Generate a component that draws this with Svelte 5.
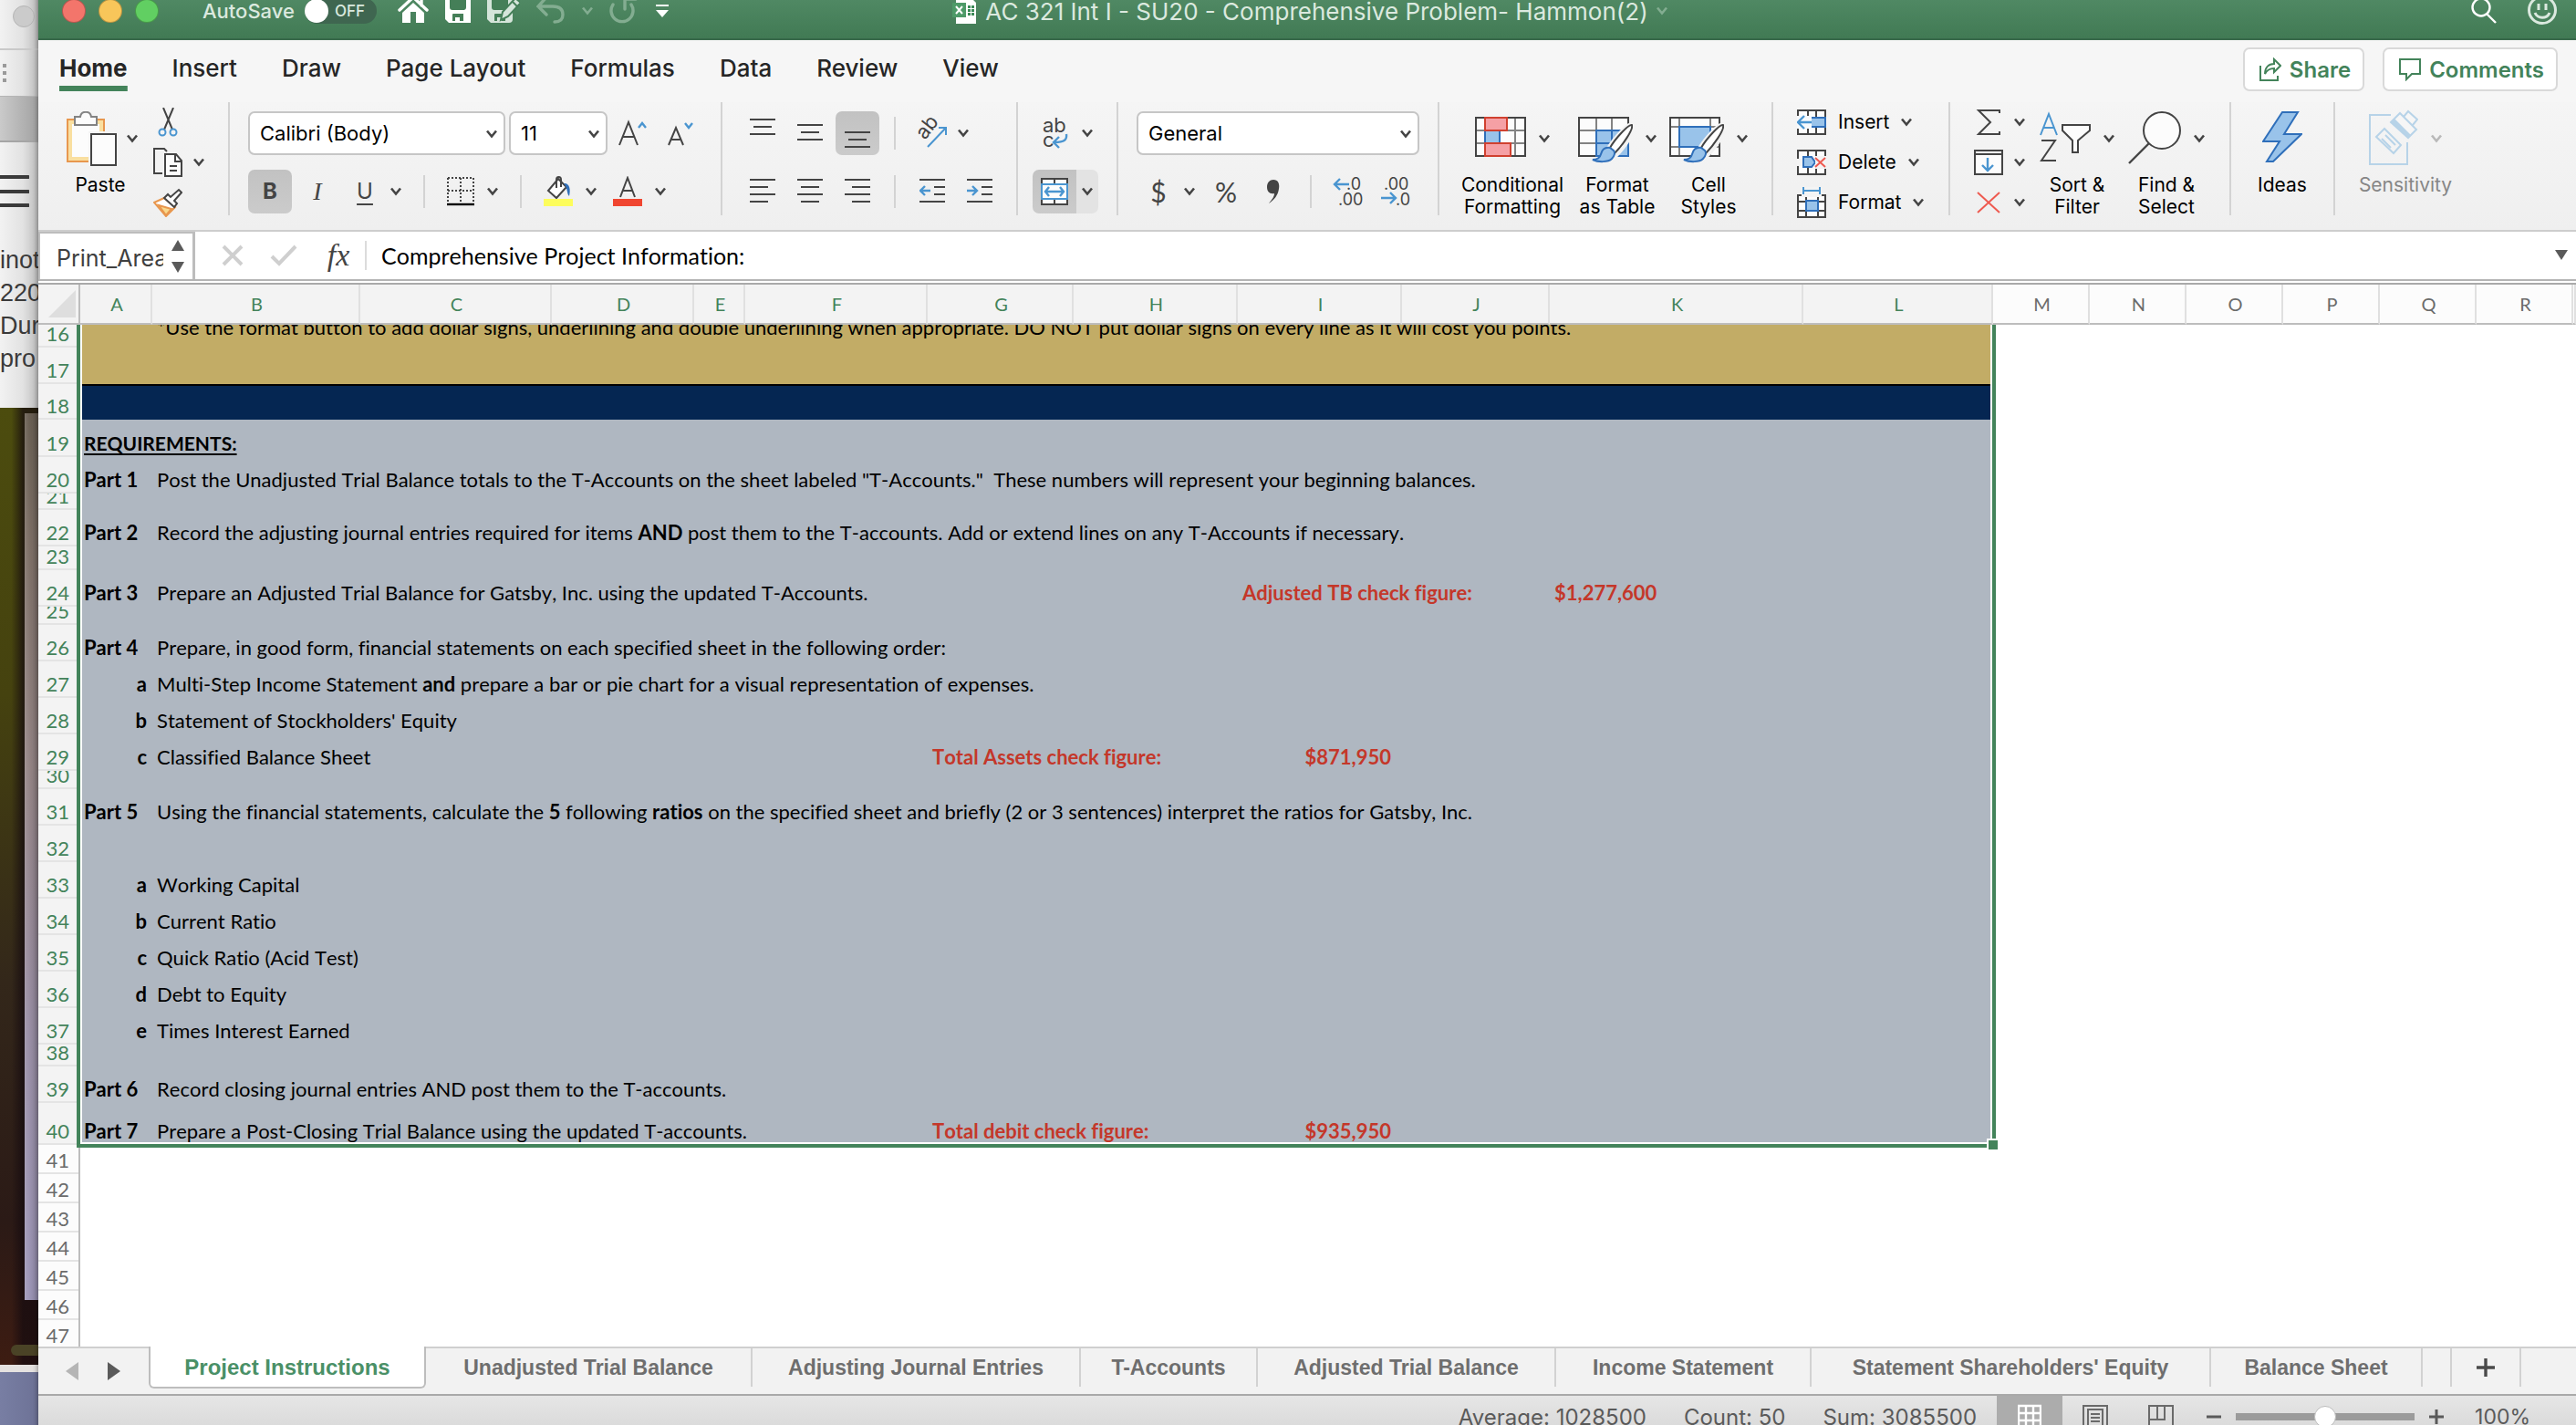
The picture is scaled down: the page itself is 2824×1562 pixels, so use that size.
<script lang="ts">
	type Row = {
		n: number;
		h: number;
		label?: string;
		sub?: boolean;
		text?: string;
		fill?: string;
		checkCol?: string;
		check?: string;
		amountCol?: string;
		amount?: string;
	};

	const ribbonTabs = ['Home', 'Insert', 'Draw', 'Page Layout', 'Formulas', 'Data', 'Review', 'View'];

	const columns = [
		{ id: 'A', w: 79 },
		{ id: 'B', w: 228 },
		{ id: 'C', w: 210 },
		{ id: 'D', w: 156 },
		{ id: 'E', w: 56 },
		{ id: 'F', w: 200 },
		{ id: 'G', w: 160 },
		{ id: 'H', w: 180 },
		{ id: 'I', w: 180 },
		{ id: 'J', w: 162 },
		{ id: 'K', w: 278 },
		{ id: 'L', w: 208 },
		{ id: 'M', w: 106 },
		{ id: 'N', w: 106 },
		{ id: 'O', w: 106 },
		{ id: 'P', w: 106 },
		{ id: 'Q', w: 106 },
		{ id: 'R', w: 106 }
	];

	const rows: Row[] = [
		{
			n: 16,
			h: 25,
			fill: 'gold raised',
			text: '*Use the format button to add dollar signs, underlining and double underlining when appropriate. DO NOT put dollar signs on every line as it will cost you points.'
		},
		{ n: 17, h: 40, fill: 'gold' },
		{ n: 18, h: 39, fill: 'navy' },
		{ n: 19, h: 41, label: 'REQUIREMENTS:' },
		{
			n: 20,
			h: 40,
			label: 'Part 1',
			text: 'Post the Unadjusted Trial Balance totals to the T-Accounts on the sheet labeled "T-Accounts."  These numbers will represent your beginning balances.'
		},
		{ n: 21, h: 18 },
		{
			n: 22,
			h: 40,
			label: 'Part 2',
			text: 'Record the adjusting journal entries required for items **AND** post them to the T-accounts. Add or extend lines on any T-Accounts if necessary.'
		},
		{ n: 23, h: 26 },
		{
			n: 24,
			h: 40,
			label: 'Part 3',
			text: 'Prepare an Adjusted Trial Balance for Gatsby, Inc. using the updated T-Accounts.',
			checkCol: 'I',
			check: 'Adjusted TB check figure:',
			amountCol: 'K',
			amount: '$1,277,600'
		},
		{ n: 25, h: 20 },
		{
			n: 26,
			h: 40,
			label: 'Part 4',
			text: 'Prepare, in good form, financial statements on each specified sheet in the following order:'
		},
		{
			n: 27,
			h: 40,
			label: 'a',
			sub: true,
			text: 'Multi-Step Income Statement **and** prepare a bar or pie chart for a visual representation of expenses.'
		},
		{ n: 28, h: 40, label: 'b', sub: true, text: "Statement of Stockholders' Equity" },
		{
			n: 29,
			h: 40,
			label: 'c',
			sub: true,
			text: 'Classified Balance Sheet',
			checkCol: 'G',
			check: 'Total Assets check figure:',
			amountCol: 'I',
			amount: '$871,950'
		},
		{ n: 30, h: 20 },
		{
			n: 31,
			h: 40,
			label: 'Part 5',
			text: 'Using the financial statements, calculate the **5** following **ratios** on the specified sheet and briefly (2 or 3 sentences) interpret the ratios for Gatsby, Inc.'
		},
		{ n: 32, h: 40 },
		{ n: 33, h: 40, label: 'a', sub: true, text: 'Working Capital' },
		{ n: 34, h: 40, label: 'b', sub: true, text: 'Current Ratio' },
		{ n: 35, h: 40, label: 'c', sub: true, text: 'Quick Ratio (Acid Test)' },
		{ n: 36, h: 40, label: 'd', sub: true, text: 'Debt to Equity' },
		{ n: 37, h: 40, label: 'e', sub: true, text: 'Times Interest Earned' },
		{ n: 38, h: 24 },
		{
			n: 39,
			h: 40,
			label: 'Part 6',
			text: 'Record closing journal entries AND post them to the T-accounts.'
		},
		{
			n: 40,
			h: 46,
			label: 'Part 7',
			text: 'Prepare a Post-Closing Trial Balance using the updated T-accounts.',
			checkCol: 'G',
			check: 'Total debit check figure:',
			amountCol: 'I',
			amount: '$935,950'
		},
		{ n: 41, h: 32 },
		{ n: 42, h: 32 },
		{ n: 43, h: 32 },
		{ n: 44, h: 32 },
		{ n: 45, h: 32 },
		{ n: 46, h: 32 },
		{ n: 47, h: 32 }
	];

	const sheets = [
		{ name: 'Project Instructions', w: 304 },
		{ name: 'Unadjusted Trial Balance', w: 358 },
		{ name: 'Adjusting Journal Entries', w: 360 },
		{ name: 'T-Accounts', w: 194 },
		{ name: 'Adjusted Trial Balance', w: 327 },
		{ name: 'Income Statement', w: 280 },
		{ name: "Statement Shareholders' Equity", w: 438 },
		{ name: 'Balance Sheet', w: 232 }
	];

	const LAST_ROW = 40;
	const LAST_COL = 11;

	let activeTab = $state('Home');
	let activeSheet = $state('Project Instructions');
	let zoom = $state(50);

	const selWidth = columns.slice(0, LAST_COL + 1).reduce((sum, c) => sum + c.w, 0);
	const selHeight = rows.filter((r) => r.n <= LAST_ROW).reduce((sum, r) => sum + r.h, 0);

	// "**x**" marks a bold run
	function runs(text: string) {
		return text.split('**').map((part, i) => ({ part, bold: i % 2 === 1 }));
	}
</script>

{#snippet chev()}
	<svg class="chev" width="12" height="10" viewBox="0 0 12 10"><path d="M1 1.5 6 7.5 11 1.5" fill="none" stroke="currentColor" stroke-width="2.6" /></svg>
{/snippet}

{#snippet lines(ends: number[][], top: number, step: number)}
	<svg width="28" height="34" viewBox="0 0 28 34">
		{#each ends as [a, b], i}
			<path d="M{a} {top + i * step}H{b}" stroke="#444" stroke-width="2" />
		{/each}
	</svg>
{/snippet}

{#snippet brush()}
	<path d="M59 15c-4-1-20 17-25 26l7 7c8-8 21-26 18-33z" fill="#fff" stroke="#f3f3f3" stroke-width="6" />
	<path d="M59 15c-4-1-19 16-24 25l5 6c8-8 21-26 19-31z" fill="#fff" stroke="#444" stroke-width="2" />
	<path d="M35 40c-6-1-9 3-10 7-1 4-4 6-9 6 6 3 17 3 21-1 3-3 4-7 2-9z" fill="#99c3ea" stroke="#2f6fba" stroke-width="2" />
{/snippet}

<div class="desktop">
	<div class="behind">
		<div class="browser">
			<div class="strip-top"><span class="dot"></span></div>
			<div class="strip-mid">
				<svg width="4" height="20" viewBox="0 0 4 20"><path d="M0 0H4V4H0zM0 8H4V12H0zM0 16H4V20H0z" fill="#9a9a9a" /></svg>
			</div>
			<div class="strip-tabs"></div>
			<div class="strip-page">
				<svg width="32" height="38" viewBox="0 0 32 38"><path d="M0 2H31M0 18H31M0 33H31" stroke="#3a3a3a" stroke-width="4" stroke-linecap="round" /></svg>
				<p>inot<br />220<br />Dur<br />pro</p>
			</div>
		</div>
		<div class="photo"><span class="panel"></span><span class="ledge"></span></div>
		<div class="blue"></div>
	</div>

	<main class="window">
		<header class="titlebar">
			<div class="lights"><i class="red"></i><i class="amber"></i><i class="lime"></i></div>
			<label class="autosave">AutoSave <input type="checkbox" /><span class="switch"><b></b>OFF</span></label>
			<div class="quick">
				<button aria-label="Home"><svg width="34" height="32" viewBox="0 0 34 32"><path d="M2 15 17 1 32 15M26 2v8" fill="none" stroke="#fff" stroke-width="3.4" stroke-linecap="round" /><path d="M5 18 17 7 29 18V29H20V17H14V29H5z" fill="#fff" /></svg></button>
				<button aria-label="Save"><svg width="28" height="30" viewBox="0 0 28 30"><path d="M0 0H28V28H4L0 24z" fill="#fff" /><path d="M5 0H23V11Q23 14 20 14H8Q5 14 5 11zM8 19Q8 18 9 18H20V26H16V22H11V26H8z" fill="#457f58" /></svg></button>
				<button aria-label="Save as"><svg width="36" height="30" viewBox="0 0 36 30"><path d="M0 0H28V24Q28 28 24 28H4L0 24z" fill="#d5e5da" /><path d="M5 0H23V11Q23 14 20 14H8Q5 14 5 11zM8 19Q8 18 9 18H20V26H16V22H11V26H8z" fill="#457f58" /><path d="M15 25 17 16 31 1 37 6 23 21z" fill="#d5e5da" stroke="#457f58" stroke-width="2" /><path d="M28 5 33 10" stroke="#457f58" stroke-width="2" /></svg></button>
				<button class="dim" aria-label="Undo"><svg width="32" height="30" viewBox="0 0 32 30"><path d="M11 0 2 10 11 19M2 10H18c8 0 11 4 11 9 0 6-4 8-9 8" fill="none" stroke="currentColor" stroke-width="3.4" stroke-linecap="round" /></svg></button>
				<span class="dim">{@render chev()}</span>
				<button class="dim" aria-label="Redo"><svg width="32" height="32" viewBox="0 0 32 32"><path d="M4 9a12 12 0 1 0 20 0M17 14V3H29" fill="none" stroke="currentColor" stroke-width="3.4" stroke-linecap="round" /></svg></button>
				<button aria-label="Customize toolbar"><svg width="16" height="16" viewBox="0 0 16 16"><path d="M1 2H15" stroke="#fff" stroke-width="2" /><path d="M1 7H15L8 15z" fill="#fff" /></svg></button>
			</div>
			<h1>
				<svg width="27" height="30" viewBox="0 0 27 30"><path d="M4 0H20L26 6V29H4z" fill="#fff" /><path d="M17 9h3v3h-3zM21 9h3v3h-3zM17 13h3v3h-3zM21 13h3v3h-3zM17 17h3v3h-3zM21 17h3v3h-3z" fill="#3b8a57" /><path d="M0 6H15V22H0z" fill="#4e9a68" /><path d="M4 10 11 18M11 10 4 18" stroke="#fff" stroke-width="2" /></svg>
				AC 321 Int I - SU20 - Comprehensive Problem- Hammon(2)
				<span class="dim">{@render chev()}</span>
			</h1>
			<div class="titlebar-end">
				<button aria-label="Search"><svg width="30" height="32" viewBox="0 0 30 32"><circle cx="12" cy="12" r="9.5" fill="none" stroke="#fff" stroke-width="2.4" /><path d="M18 19 28 29" stroke="#fff" stroke-width="2.4" /></svg></button>
				<button aria-label="Feedback"><svg width="34" height="34" viewBox="0 0 34 34"><circle cx="17" cy="16" r="14.5" fill="none" stroke="#dbe9df" stroke-width="3" /><path d="M13 9V16M21 9V16" stroke="#dbe9df" stroke-width="3" /><path d="M9 19c3 7 13 7 16 0" fill="none" stroke="#dbe9df" stroke-width="3" /></svg></button>
			</div>
		</header>

		<nav class="tabs">
			{#each ribbonTabs as tab}
				<button class="tab" class:active={activeTab === tab} onclick={() => (activeTab = tab)}>{tab}</button>
			{/each}
			<div class="tabs-end">
				<button class="pill"><svg width="24" height="26" viewBox="0 0 24 26"><path d="M1 9V25H20V20" fill="none" stroke="#43835a" stroke-width="2" /><path d="M6 18C6 11 10 7 16 7V2L23 9 16 16V12C11 12 8 14 6 18z" fill="none" stroke="#43835a" stroke-width="2" /></svg>Share</button>
				<button class="pill"><svg width="24" height="26" viewBox="0 0 24 26"><path d="M1 2H23V18H14L8 24V18H1z" fill="none" stroke="#43835a" stroke-width="2" /></svg>Comments</button>
			</div>
		</nav>

		<section class="ribbon">
			<div class="group clipboard">
				<button class="big">
					<span class="big-icon">
						<svg width="56" height="60" viewBox="0 0 56 60"><path d="M1 9H41V55H1z" fill="#f9dfa0" stroke="#e8974e" stroke-width="2" /><path d="M6 14H36V50H6z" fill="#fcfcfc" /><path d="M9 15V6H15C16-1 26-1 27 6H33V15z" fill="#fcfcfc" stroke="#838383" stroke-width="2" /><path d="M24 22H56V60H24z" fill="#f4f4f4" /><path d="M27 25H54V59H27z" fill="#fcfcfc" stroke="#444" stroke-width="2" /></svg>
						{@render chev()}
					</span>
					<span>Paste</span>
				</button>
				<div class="stack">
					<button aria-label="Cut"><svg width="32" height="32" viewBox="0 0 32 32"><path d="M11 0 21 24M22 0 12 24" stroke="#444" stroke-width="2" /><circle cx="10" cy="27" r="3.5" fill="none" stroke="#4a95d0" stroke-width="2" /><circle cx="22" cy="27" r="3.5" fill="none" stroke="#4a95d0" stroke-width="2" /></svg></button>
					<button aria-label="Copy"><svg width="32" height="32" viewBox="0 0 32 32"><path d="M10 28H1V1H12L15 4" fill="none" stroke="#444" stroke-width="2" /><path d="M13 7H25L31 14V31H13z" fill="#fcfcfc" stroke="#444" stroke-width="2" /><path d="M24 7V15H31M18 20H26M18 25H26" fill="none" stroke="#444" stroke-width="2" /></svg>{@render chev()}</button>
					<button aria-label="Format painter"><svg width="32" height="32" viewBox="0 0 32 32"><path d="M1 16 12 11 24 21 14 31z" fill="#fff" stroke="#e8974e" stroke-width="2" /><path d="M6 19 20 23 14 30z" fill="#f9d88c" stroke="#e8974e" stroke-width="2" /><path d="M12 11 16 7 19 10 28 2 31 5 23 14 26 17 23 21z" fill="#fcfcfc" stroke="#444" stroke-width="2" /></svg></button>
				</div>
			</div>
			<div class="sep"></div>

			<div class="group rows">
				<div class="line">
					<span class="dropdown font-name"><select aria-label="Font"><option>Calibri (Body)</option></select>{@render chev()}</span>
					<span class="dropdown font-size"><select aria-label="Font size"><option>11</option></select>{@render chev()}</span>
					<button class="tool" aria-label="Increase font size"><svg width="32" height="30" viewBox="0 0 32 30"><path d="M1 28 11 3 21 28M5 19H17" fill="none" stroke="#444" stroke-width="2" /><path d="M22 9 26 4 30 9" fill="none" stroke="#4a95d0" stroke-width="2.4" /></svg></button>
					<button class="tool" aria-label="Decrease font size"><svg width="32" height="30" viewBox="0 0 32 30"><path d="M3 28 11 9 19 28M6 22H16" fill="none" stroke="#444" stroke-width="2" /><path d="M21 4 25 9 29 4" fill="none" stroke="#4a95d0" stroke-width="2.4" /></svg></button>
				</div>
				<div class="line">
					<button class="tool on"><b>B</b></button>
					<button class="tool"><i>I</i></button>
					<button class="tool"><u>U</u></button>
					{@render chev()}
					<span class="divider"></span>
					<button class="pair" aria-label="Borders"><svg width="30" height="32" viewBox="0 0 30 32"><path d="M1 1H29M1 15H29M1 1V28M15 1V28M29 1V28" stroke="#444" stroke-width="2" stroke-dasharray="2 2" /><path d="M0 30H30" stroke="#000" stroke-width="2.4" /></svg>{@render chev()}</button>
					<span class="divider"></span>
					<button class="pair" aria-label="Fill color"><svg width="32" height="34" viewBox="0 0 32 34"><path d="M5 16 16 3 25 12 14 24z" fill="#fff" stroke="#444" stroke-width="2" /><path d="M14 13V4c0-4 5-4 5 0v8" fill="none" stroke="#444" stroke-width="2" /><path d="M22 8c6-1 8 6 6 14-3-3-1-8-6-14z" fill="#2f6fba" /><path d="M0 25H32V33H0z" fill="#fdfd5c" /></svg>{@render chev()}</button>
					<button class="pair font-color" aria-label="Font color"><svg width="32" height="34" viewBox="0 0 32 34"><path d="M8 23 16 2 24 23M11 16H21" fill="none" stroke="#444" stroke-width="2" /><path d="M0 25H32V33H0z" fill="#f04530" /></svg>{@render chev()}</button>
				</div>
			</div>
			<div class="sep"></div>

			<div class="group rows align">
				<div class="line">
					<button class="tool" aria-label="Top align">{@render lines([[0, 28], [4, 24], [0, 28]], 2, 8)}</button>
					<button class="tool" aria-label="Middle align">{@render lines([[0, 28], [4, 24], [0, 28]], 8, 8)}</button>
					<button class="tool on" aria-label="Bottom align">{@render lines([[0, 28], [4, 24], [0, 28]], 16, 8)}</button>
					<span class="divider tight"></span>
					<button class="tool" aria-label="Orientation"><svg width="34" height="34" viewBox="0 0 34 34"><text x="0" y="0" transform="translate(9 25) rotate(-52)" font-size="22" fill="#444">ab</text><path d="M12 32 32 11M24 11H32V19" fill="none" stroke="#4a95d0" stroke-width="2" /></svg></button>
					{@render chev()}
				</div>
				<div class="line">
					<button class="tool" aria-label="Align left">{@render lines([[0, 28], [0, 20], [0, 28], [0, 20]], 4, 8)}</button>
					<button class="tool" aria-label="Center">{@render lines([[0, 28], [4, 24], [0, 28], [4, 24]], 4, 8)}</button>
					<button class="tool" aria-label="Align right">{@render lines([[0, 28], [8, 28], [0, 28], [8, 28]], 4, 8)}</button>
					<span class="divider tight"></span>
					<button class="tool" aria-label="Decrease indent"><svg width="28" height="34" viewBox="0 0 28 34"><path d="M0 4H28M16 12H28M16 20H28M0 28H28" stroke="#444" stroke-width="2" /><path d="M12 16H1M6 11 1 16 6 21" fill="none" stroke="#4a95d0" stroke-width="2.4" /></svg></button>
					<button class="tool" aria-label="Increase indent"><svg width="28" height="34" viewBox="0 0 28 34"><path d="M0 4H28M16 12H28M16 20H28M0 28H28" stroke="#444" stroke-width="2" /><path d="M0 16H11M6 11 11 16 6 21" fill="none" stroke="#4a95d0" stroke-width="2.4" /></svg></button>
				</div>
			</div>
			<div class="sep"></div>

			<div class="group rows wrap">
				<div class="line">
					<button class="tool" aria-label="Wrap text"><svg width="32" height="36" viewBox="0 0 32 36"><text x="3" y="17" font-size="22" fill="#444">ab</text><text x="3" y="33" font-size="22" fill="#444">c</text><path d="M29 19c1 6-2 9-13 9M21 22 15 28 21 34" fill="none" stroke="#4a95d0" stroke-width="2.4" /></svg></button>
					<span class="chev-box">{@render chev()}</span>
				</div>
				<div class="line">
					<button class="tool on square" aria-label="Merge and center"><svg width="32" height="32" viewBox="0 0 32 32"><path d="M2 2H30V30H2zM16 2V30" fill="#fcfcfc" stroke="#444" stroke-width="2" /><path d="M2 8H30V24H2z" fill="#fcfcfc" stroke="#4a95d0" stroke-width="2" /><path d="M6 16H26M10 11 6 16 10 21M22 11 26 16 22 21" fill="none" stroke="#4a95d0" stroke-width="2.4" /></svg></button>
					<span class="chev-box shaded">{@render chev()}</span>
				</div>
			</div>
			<div class="sep"></div>

			<div class="group rows">
				<div class="line">
					<span class="dropdown number-format"><select aria-label="Number format"><option>General</option></select>{@render chev()}</span>
				</div>
				<div class="line">
					<button class="tool glyph">$</button>
					{@render chev()}
					<button class="tool glyph percent">%</button>
					<button class="tool" aria-label="Comma style"><svg width="16" height="28" viewBox="0 0 16 28"><path d="M8 1c5 0 7 4 6 10-1 7-5 12-11 16 3-4 6-7 6-11C4 17 1 14 1 9c0-5 3-8 7-8z" fill="#444" /></svg></button>
					<span class="divider tight"></span>
					<button class="tool" aria-label="Increase decimal"><svg width="34" height="34" viewBox="0 0 34 34"><text x="15" y="15" font-size="18" fill="#444">.0</text><text x="6" y="32" font-size="18" fill="#444">.00</text><path d="M18 9H2M8 3 2 9 8 15" fill="none" stroke="#4a95d0" stroke-width="2.4" /></svg></button>
					<button class="tool" aria-label="Decrease decimal"><svg width="34" height="34" viewBox="0 0 34 34"><text x="4" y="15" font-size="18" fill="#444">.00</text><text x="17" y="32" font-size="18" fill="#444">.0</text><path d="M1 24H17M11 18 17 24 11 30" fill="none" stroke="#4a95d0" stroke-width="2.4" /></svg></button>
				</div>
			</div>
			<div class="sep"></div>

			<div class="group styles">
				<button class="big w120">
					<span class="big-icon">
						<svg width="56" height="60" viewBox="0 0 56 60"><path d="M1 7H55V49H1z" fill="#fcfcfc" /><path d="M1 21H55M1 35H55M11 7V49M44 7V49" stroke="#838383" stroke-width="2" /><path d="M1 7H55V49H1z" fill="none" stroke="#444" stroke-width="2" /><path d="M11 21H27V35H11z" fill="#99c3ea" stroke="#2f6fba" stroke-width="2" /><path d="M11 7H35V21H11zM11 35H39V49H11z" fill="#f5a0a5" stroke="#d0402f" stroke-width="2" /></svg>
						{@render chev()}
					</span>
					<span>Conditional<br />Formatting</span>
				</button>
				<button class="big w110">
					<span class="big-icon">
						<svg width="60" height="60" viewBox="0 0 60 60"><path d="M1 7H55V49H1z" fill="#fcfcfc" /><path d="M1 21H55M1 35H20M20 7V49M37 7V21" stroke="#838383" stroke-width="2" /><path d="M1 7H55V49H1z" fill="none" stroke="#444" stroke-width="2" /><path d="M20 21H55V49H20zM20 35H55M37 21V49" fill="#99c3ea" stroke="#2f6fba" stroke-width="2" />{@render brush()}</svg>
						{@render chev()}
					</span>
					<span>Format<br />as Table</span>
				</button>
				<button class="big w90">
					<span class="big-icon">
						<svg width="60" height="60" viewBox="0 0 60 60"><path d="M1 7H55V49H1z" fill="#fcfcfc" /><path d="M1 17H55M1 39H55M11 7V49M45 7V49" stroke="#838383" stroke-width="2" /><path d="M1 7H55V49H1z" fill="none" stroke="#444" stroke-width="2" /><path d="M11 17H45V39H11z" fill="#99c3ea" stroke="#2f6fba" stroke-width="2" />{@render brush()}</svg>
						{@render chev()}
					</span>
					<span>Cell<br />Styles</span>
				</button>
			</div>
			<div class="sep"></div>

			<div class="group cells">
				<div class="stack">
					<button><svg width="32" height="32" viewBox="0 0 32 32"><path d="M1 3H31V29H1zM12 3V29M21 3V29" fill="#fcfcfc" stroke="#444" stroke-width="2" /><path d="M10 11H31V21H10z" fill="#99c3ea" stroke="#2f6fba" stroke-width="2" /><path d="M0 9H16V23H0z" fill="#f6f9fc" /><path d="M16 16H2M8 9 1 16 8 23" fill="none" stroke="#4a95d0" stroke-width="2.4" /></svg>Insert {@render chev()}</button>
					<button><svg width="32" height="32" viewBox="0 0 32 32"><path d="M1 3H31V29H1zM12 3V29M21 3V29" fill="#fcfcfc" stroke="#444" stroke-width="2" /><path d="M0 12H32V20H0z" fill="#f4f4f4" /><path d="M7 10H16L20 16 16 21H7z" fill="#99c3ea" stroke="#2f6fba" stroke-width="2" /><path d="M20 9H32V23H20z" fill="#f4f4f4" /><path d="M20 11 31 21M31 11 20 21" stroke="#ee5a50" stroke-width="2" /></svg>Delete {@render chev()}</button>
					<button><svg width="32" height="34" viewBox="0 0 32 34"><path d="M1 9H31V33H1zM10 9V33M23 9V33M1 16H31M1 26H31" fill="#fcfcfc" stroke="#444" stroke-width="2" /><path d="M5 0H27V11H5z" fill="#f4f4f4" /><path d="M7 4H25M7 0V8M25 0V8" stroke="#4a95d0" stroke-width="2" /><path d="M10 15H23V26H10z" fill="#99c3ea" stroke="#2f6fba" stroke-width="2" /></svg>Format {@render chev()}</button>
				</div>
			</div>
			<div class="sep"></div>

			<div class="group editing">
				<div class="stack">
					<button aria-label="AutoSum"><svg width="32" height="30" viewBox="0 0 32 30"><path d="M28 5V2H5L18 15 5 28H28V25" fill="none" stroke="#444" stroke-width="2" /></svg>{@render chev()}</button>
					<button aria-label="Fill"><svg width="32" height="30" viewBox="0 0 32 30"><path d="M1 2H31V28H1zM1 6H31" fill="#fcfcfc" stroke="#444" stroke-width="2" /><path d="M15 10V24M9 18 15 24 21 18" fill="none" stroke="#4a95d0" stroke-width="2.4" /></svg>{@render chev()}</button>
					<button aria-label="Clear"><svg width="32" height="30" viewBox="0 0 32 30"><path d="M4 4 28 26M28 4 4 26" stroke="#ee5a50" stroke-width="2" /></svg>{@render chev()}</button>
				</div>
				<button class="big w98">
					<span class="big-icon">
						<svg width="56" height="60" viewBox="0 0 56 60"><path d="M1 26 10 3 19 26M4 18H16" fill="none" stroke="#4a95d0" stroke-width="2" /><path d="M2 32H17L2 54H18" fill="none" stroke="#444" stroke-width="2" /><path d="M25 15H55V21L42 32V45H36V32L25 21z" fill="#fcfcfc" stroke="#444" stroke-width="2" /></svg>
						{@render chev()}
					</span>
					<span>Sort &amp;<br />Filter</span>
				</button>
				<button class="big w98">
					<span class="big-icon">
						<svg width="58" height="60" viewBox="0 0 58 60"><circle cx="37" cy="21" r="20" fill="#fcfcfc" stroke="#444" stroke-width="2" /><path d="M23 35 1 57" stroke="#444" stroke-width="2.4" /></svg>
						{@render chev()}
					</span>
					<span>Find &amp;<br />Select</span>
				</button>
			</div>
			<div class="sep"></div>

			<div class="group">
				<button class="big w112">
					<span class="big-icon"><svg width="44" height="60" viewBox="0 0 44 60"><path d="M22 1H39L24 25H43L12 55H5L19 33H1z" fill="#99c3ea" stroke="#2f6fba" stroke-width="2" /></svg></span>
					<span>Ideas</span>
				</button>
			</div>
			<div class="sep"></div>

			<div class="group sensitivity">
				<button class="big w110" disabled>
					<span class="big-icon">
						<svg width="54" height="64" viewBox="0 0 54 64"><path d="M24 6H1V60H42V36" fill="none" stroke="#b7d3e8" stroke-width="2" /><path d="M17 21 8 30 27 48 35 39zM18 28 29 39M14 32 24 42" fill="none" stroke="#b7d3e8" stroke-width="2" /><path d="M24 14 34 4 52 22 43 31zM38 8 43 2 53 11 48 17" fill="#f6f6f6" stroke="#b7d3e8" stroke-width="2" /><path d="M24 14 28 10 46 28 43 31z" fill="#b7d3e8" /></svg>
						{@render chev()}
					</span>
					<span>Sensitivity</span>
				</button>
			</div>
		</section>

		<section class="formula-bar">
			<div class="name-box">
				<input aria-label="Name box" value="Print_Area" />
				<svg width="16" height="36" viewBox="0 0 16 36"><path d="M8 0 15 12H1zM8 36 15 24H1z" fill="#5a5a5a" /></svg>
			</div>
			<button aria-label="Cancel"><svg width="24" height="24" viewBox="0 0 24 24"><path d="M2 2 22 22M22 2 2 22" stroke="#cfcfcf" stroke-width="4" /></svg></button>
			<button aria-label="Enter"><svg width="30" height="24" viewBox="0 0 30 24"><path d="M2 13 10 21 28 2" fill="none" stroke="#cfcfcf" stroke-width="4" /></svg></button>
			<button class="fx">fx</button>
			<input class="formula" aria-label="Formula" value="Comprehensive Project Information:" />
			<svg width="14" height="12" viewBox="0 0 14 12"><path d="M0 0H14L7 11z" fill="#5a5a5a" /></svg>
		</section>

		<div class="sheet">
			<table>
				<colgroup>
					<col style="width: 46px" />
					{#each columns as col}
						<col style="width: {col.w}px" />
					{/each}
					<col />
				</colgroup>
				<thead>
					<tr>
						<th class="corner"><svg width="30" height="30" viewBox="0 0 30 30"><path d="M30 0V30H0z" fill="#dedede" /></svg></th>
						{#each columns as col, i}
							<th class:picked={i <= LAST_COL}>{col.id}</th>
						{/each}
						<th></th>
					</tr>
				</thead>
				<tbody>
					{#each rows as row}
						<tr class={row.n <= LAST_ROW ? (row.fill ?? 'slate') : 'blank'}>
							<th class:picked={row.n <= LAST_ROW}><div style="height: {row.h}px">{row.n}</div></th>
							{#each columns as col, i}
								<td class:inside={i <= LAST_COL}>
									{#if col.id === 'A' && row.label}
										<div class="key" class:sub={row.sub} class:heading={row.n === 19}>{row.label}</div>
									{:else if col.id === 'B' && row.text}
										<div style="height: {row.h}px"><span>{#each runs(row.text) as run}{#if run.bold}<b>{run.part}</b>{:else}{run.part}{/if}{/each}</span></div>
									{:else if col.id === row.checkCol}
										<div class="check">{row.check}</div>
									{:else if col.id === row.amountCol}
										<div class="check" class:money={col.id === 'I'}>{row.amount}</div>
									{/if}
								</td>
							{/each}
							<td></td>
						</tr>
					{/each}
				</tbody>
			</table>
			<div class="selection" style="width: {selWidth + 7}px; height: {selHeight + 3}px"><span class="handle"></span></div>
		</div>

		<nav class="sheet-tabs">
			<div class="arrows">
				<button aria-label="Previous sheet"><svg width="14" height="20" viewBox="0 0 14 20"><path d="M14 0V20L0 10z" fill="#b5b5b5" /></svg></button>
				<button aria-label="Next sheet"><svg width="14" height="20" viewBox="0 0 14 20"><path d="M0 0V20L14 10z" fill="#5a5a5a" /></svg></button>
			</div>
			{#each sheets as sheet}
				<button class="sheet-tab" class:active={activeSheet === sheet.name} style="width: {sheet.w}px" onclick={() => (activeSheet = sheet.name)}>{sheet.name}</button>
			{/each}
			<span class="filler"></span>
			<button class="add" aria-label="Add sheet"><svg width="20" height="20" viewBox="0 0 20 20"><path d="M10 0V20M0 10H20" stroke="#4a4a4a" stroke-width="3.4" /></svg></button>
		</nav>

		<footer class="status">
			<div class="stats"><span>Average: 1028500</span><span>Count: 50</span><span>Sum: 3085500</span></div>
			<button class="view on" aria-label="Normal view"><svg width="26" height="28" viewBox="0 0 26 28"><path d="M1 2H25V27H1zM9 2V27M17 2V27M1 10H25M1 18H25" fill="none" stroke="#fff" stroke-width="2.4" /></svg></button>
			<button class="view" aria-label="Page layout view"><svg width="28" height="28" viewBox="0 0 28 28"><path d="M1 2H27V27H1z" fill="none" stroke="#6a6a6a" stroke-width="2" /><path d="M6 6H22V24H6zM9 11H19M9 15H19M9 19H19" fill="none" stroke="#6a6a6a" stroke-width="2" /></svg></button>
			<button class="view" aria-label="Page break view"><svg width="28" height="28" viewBox="0 0 28 28"><path d="M1 27V2H27V27M1 17H18V2M10 2V17" fill="none" stroke="#6a6a6a" stroke-width="2" /></svg></button>
			<div class="zoom">
				<button aria-label="Zoom out"><svg width="16" height="16" viewBox="0 0 16 16"><path d="M0 8H16" stroke="#5a5a5a" stroke-width="3" /></svg></button>
				<input type="range" min="0" max="100" bind:value={zoom} aria-label="Zoom" />
				<button aria-label="Zoom in"><svg width="16" height="16" viewBox="0 0 16 16"><path d="M0 8H16M8 0V16" stroke="#5a5a5a" stroke-width="3" /></svg></button>
				<span class="percent-label">100%</span>
			</div>
		</footer>
	</main>
</div>

<style>
	:global(body) {
		overflow: hidden;
	}

	.desktop {
		--ui: Inter, 'Liberation Sans', sans-serif;
		--cell: Lato, 'Open Sans', sans-serif;
		--green: #43835a;
		display: flex;
		height: 100vh;
		overflow: hidden;
		font-family: var(--ui);
		background: #fff;
	}

	.desktop * {
		box-sizing: border-box;
	}

	button {
		display: flex;
		align-items: center;
		justify-content: center;
		margin: 0;
		padding: 0;
		border: 0;
		background: none;
		font: inherit;
		color: inherit;
	}

	svg {
		display: block;
		flex: none;
	}

	.chev {
		color: #444;
	}

	/* windows behind */
	.behind {
		display: flex;
		flex-direction: column;
		flex: 0 0 42px;
		overflow: hidden;
		background: #e8e8e8;
	}

	.browser {
		display: flex;
		flex-direction: column;
		height: 447px;
		background: linear-gradient(90deg, #f2f2f2, #e2e2e2 60%, #bcbcbc);
	}

	.strip-top {
		height: 55px;
		padding: 6px 0 0 14px;
		border-bottom: 2px solid #c9c9c9;
	}

	.dot {
		display: block;
		width: 24px;
		height: 24px;
		border: 1px solid #b5b5b5;
		border-radius: 50%;
		background: #cbcbcb;
	}

	.strip-mid {
		height: 50px;
		padding: 15px 0 0 3px;
	}

	.strip-tabs {
		height: 51px;
		border-top: 1px solid #b5b5b5;
		border-bottom: 2px solid #a5a5a5;
		background: linear-gradient(90deg, #cacaca, #a2a2a2);
	}

	.strip-page {
		padding-top: 36px;
	}

	.strip-page p {
		margin: 37px 0 0;
		font-family: 'Liberation Sans', Arial, sans-serif;
		font-size: 27px;
		line-height: 36px;
		color: #3a3a3a;
	}

	.photo {
		display: flex;
		flex-direction: column;
		flex: 1;
		padding-top: 6px;
		background: linear-gradient(90deg, transparent 30%, rgba(20, 10, 15, 0.7) 60%), linear-gradient(#4c4c0e, #45420f 30%, #33271a 60%, #2b1a16 85%, #3d1c12);
	}

	.panel {
		flex: 1;
		margin: 0 0 49px 27px;
		background: linear-gradient(90deg, rgba(255, 255, 255, 0.1), transparent 30%, rgba(0, 0, 0, 0.15)), linear-gradient(#6b6155, #807269 15%, #978788 40%, #9c91a8 70%, #9f98ba);
	}

	.ledge {
		height: 12px;
		margin: 0 0 10px 12px;
		border-radius: 6px 0 0 6px;
		background: #4a4326;
	}

	.blue {
		height: 66px;
		border-top: 8px solid #e5e2e0;
		background: linear-gradient(90deg, #787ea3, #6d7296);
	}

	.window {
		display: flex;
		flex-direction: column;
		flex: 1;
		min-width: 0;
		height: calc(100vh + 32px);
		margin-top: -18px;
		box-shadow: 0 0 6px rgba(0, 0, 0, 0.5);
		background: #fff;
	}

	/* title bar */
	.titlebar {
		display: grid;
		grid-template-columns: 1fr auto 1fr;
		grid-template-areas: 'left title right';
		align-items: center;
		flex: none;
		height: 62px;
		padding: 0 20px 0 26px;
		border-bottom: 2px solid #38694a;
		background: linear-gradient(#568f6a, #417a54);
		color: #dbe9df;
	}

	.titlebar h1 {
		display: flex;
		align-items: center;
		gap: 9px;
		grid-area: title;
		margin: 0;
		font-size: 26px;
		font-weight: 400;
		white-space: nowrap;
	}

	.dim,
	.dim .chev {
		color: #83ad91;
	}

	.lights,
	.autosave,
	.quick,
	.titlebar-end {
		display: flex;
		align-items: center;
	}

	.lights {
		grid-area: left;
		gap: 14px;
	}

	.lights i {
		width: 26px;
		height: 26px;
		border: 1px solid rgba(0, 0, 0, 0.25);
		border-radius: 50%;
	}

	.red {
		background: #f3756b;
	}

	.amber {
		background: #f8c65a;
	}

	.lime {
		background: #61cf62;
	}

	.autosave {
		grid-area: left;
		gap: 11px;
		margin-left: 154px;
		font-size: 22px;
		font-weight: 500;
	}

	.autosave input {
		position: absolute;
		opacity: 0;
	}

	.switch {
		display: flex;
		align-items: center;
		gap: 7px;
		width: 79px;
		height: 28px;
		border-radius: 14px;
		background: #3f6650;
		font-size: 17px;
		font-weight: 500;
	}

	.switch b {
		width: 26px;
		height: 26px;
		border-radius: 50%;
		background: #fff;
	}

	.quick {
		grid-area: left;
		gap: 18px;
		margin-left: 368px;
	}

	.titlebar-end {
		grid-area: right;
		justify-content: flex-end;
		gap: 32px;
	}

	/* ribbon tabs */
	.tabs {
		display: flex;
		flex: none;
		gap: 49px;
		height: 68px;
		padding: 8px 20px 0 23px;
		background: #f6f6f6;
		color: #262626;
		font-size: 26px;
		font-weight: 500;
	}

	.tab {
		height: 48px;
		padding-bottom: 3px;
		white-space: nowrap;
	}

	.tab.active {
		font-weight: 700;
		background: linear-gradient(var(--green), var(--green)) bottom / 100% 6px no-repeat;
	}

	.tabs-end {
		display: flex;
		gap: 20px;
		margin-left: auto;
	}

	.pill {
		gap: 9px;
		height: 48px;
		padding: 0 13px 0 16px;
		border: 2px solid #d9d9d9;
		border-radius: 7px;
		background: #fff;
		color: var(--green);
		font-size: 24px;
		font-weight: 600;
	}

	/* ribbon */
	.ribbon {
		display: flex;
		align-items: flex-start;
		flex: none;
		height: 142px;
		border-bottom: 2px solid #cdcdcd;
		background: linear-gradient(#f5f5f5, #efefef);
		color: #000;
		font-size: 21px;
		line-height: 24px;
	}

	.sep {
		flex: none;
		width: 2px;
		height: 124px;
		background: #d3d3d3;
	}

	.group {
		display: flex;
		flex: none;
	}

	.clipboard {
		width: 208px;
		padding-left: 26px;
	}

	.rows {
		flex-direction: column;
		gap: 16px;
		padding: 10px 20px 0;
	}

	.rows.align {
		padding-right: 16px;
	}

	.rows.wrap {
		padding-left: 16px;
	}

	.styles {
		padding: 0 24px 0 20px;
	}

	.sensitivity {
		padding-left: 22px;
	}

	.line {
		display: flex;
		align-items: center;
		gap: 4px;
		height: 48px;
	}

	.wrap .line {
		gap: 0;
	}

	.big {
		flex-direction: column;
		justify-content: flex-start;
		padding-top: 10px;
		white-space: nowrap;
	}

	.clipboard .big {
		width: 84px;
	}

	.big-icon {
		display: flex;
		align-items: center;
		justify-content: center;
		gap: 14px;
		height: 60px;
		margin-bottom: 9px;
	}

	.clipboard .big-icon {
		gap: 10px;
		padding-left: 4px;
	}

	.w90 {
		width: 90px;
	}

	.w98 {
		width: 98px;
	}

	.w110 {
		width: 110px;
	}

	.w112 {
		width: 112px;
	}

	.w120 {
		width: 120px;
	}

	.big:disabled {
		color: #868686;
	}

	.big:disabled .chev {
		color: #b9b9b9;
	}

	.stack {
		display: flex;
		flex-direction: column;
	}

	.stack button {
		gap: 12px;
		justify-content: flex-start;
		height: 44px;
	}

	.clipboard .stack {
		margin-left: 16px;
	}

	.cells {
		width: 192px;
		padding-left: 26px;
	}

	.cells .stack button {
		gap: 13px;
	}

	.editing {
		padding: 0 20px 0 26px;
	}

	.editing .stack {
		margin-right: 8px;
	}

	.dropdown {
		position: relative;
		height: 48px;
	}

	.dropdown select {
		width: 100%;
		height: 100%;
		padding: 0 11px;
		border: 2px solid #c6c6c6;
		border-radius: 7px;
		background: #fff;
		appearance: none;
		font: 22px var(--ui);
		color: #000;
	}

	.dropdown .chev {
		position: absolute;
		top: 20px;
		right: 9px;
	}

	.font-name {
		width: 282px;
	}

	.font-size {
		width: 108px;
	}

	.number-format {
		width: 310px;
	}

	.tool {
		width: 48px;
		height: 48px;
		color: #444;
		font-size: 24px;
	}

	.tool b {
		font-weight: 700;
	}

	.tool i {
		font-family: 'Liberation Serif', serif;
		font-size: 28px;
	}

	.tool u {
		text-underline-offset: 5px;
	}

	.tool.on {
		border-radius: 7px;
		background: linear-gradient(#c2c2c2, #cbcbcb);
	}

	.tool.square {
		border-radius: 7px 0 0 7px;
	}

	.glyph {
		font: 30px Lato, sans-serif;
	}

	.percent {
		margin-left: 6px;
	}

	.divider {
		width: 2px;
		height: 36px;
		margin: 0 20px;
		background: #d3d3d3;
	}

	.divider.tight {
		margin: 0 12px;
	}

	.pair {
		gap: 14px;
	}

	.font-color {
		margin-left: 14px;
	}

	.chev-box {
		display: flex;
		align-items: center;
		justify-content: center;
		width: 24px;
		height: 48px;
	}

	.shaded {
		border-radius: 0 7px 7px 0;
		background: #e3e3e3;
	}

	/* formula bar */
	.formula-bar {
		display: flex;
		align-items: center;
		flex: none;
		height: 54px;
		padding-right: 9px;
		border-bottom: 2px solid #b4b4b4;
		background: #fff;
	}

	.name-box {
		display: flex;
		align-items: center;
		width: 172px;
		height: 52px;
		padding: 4px 8px 0 18px;
		border: 2px solid #bdbdbd;
		border-width: 2px 3px 0 2px;
	}

	.name-box input {
		flex: 1;
		min-width: 0;
		margin-right: 8px;
		padding: 0;
		border: 0;
		font: 25px var(--ui);
		color: #404040;
	}

	.name-box svg {
		margin-bottom: 4px;
	}

	.formula-bar button {
		width: 30px;
		margin-left: 26px;
	}

	.formula-bar .fx {
		margin: 0 14px 0 30px;
		font: italic 34px 'Liberation Serif', serif;
		color: #444;
	}

	.formula {
		flex: 1;
		height: 32px;
		padding: 0 0 0 16px;
		border: 0;
		border-left: 2px solid #dcdcdc;
		font: 25px var(--cell);
		font-kerning: none;
		font-variant-ligatures: none;
		color: #000;
	}

	/* sheet */
	.sheet {
		position: relative;
		flex: 1;
		min-height: 0;
		margin-top: 2px;
		border-top: 2px solid #a9a9a9;
		overflow: hidden;
	}

	table {
		width: 100%;
		border-spacing: 0;
		table-layout: fixed;
		font-family: var(--cell);
		font-size: 22px;
		font-kerning: none;
		font-variant-ligatures: none;
		line-height: 26px;
		color: #000;
	}

	th {
		padding: 0;
		font-weight: 400;
		color: #6b6b6b;
	}

	thead th {
		height: 44px;
		padding-left: 3px;
		border-right: 2px solid #e0e0e0;
		border-bottom: 2px solid #bdbdbd;
		background: #fcfcfc;
		font-size: 20px;
	}

	th.picked {
		background: #f3f3f3;
		color: var(--green);
	}

	thead .corner {
		background: #f3f3f3;
		border-right-color: #bdbdbd;
	}

	.corner svg {
		margin-left: 8px;
	}

	tbody th {
		border-right: 2px solid #bdbdbd;
		background: #fcfcfc;
	}

	tbody th div {
		display: flex;
		align-items: flex-end;
		justify-content: flex-end;
		padding-right: 10px;
		border-bottom: 2px solid #e4e4e4;
		overflow-y: clip;
	}

	td {
		padding: 0 0 2px 4px;
		vertical-align: bottom;
		white-space: pre;
		overflow: visible;
	}

	td div[style] {
		display: flex;
		align-items: flex-end;
		margin-bottom: -2px;
		padding: 0 0 2px 1px;
		overflow-x: visible;
		overflow-y: clip;
	}

	.slate .inside {
		background: #afb7c1;
	}

	.gold .inside {
		background: #c2ac66;
	}

	.navy .inside {
		border-top: 2px solid #000;
		background: #052652;
	}

	.raised td div[style] {
		padding-bottom: 9px;
	}

	.key {
		font-weight: 700;
	}

	.key.sub {
		padding-right: 6px;
		text-align: right;
	}

	.key.heading {
		font-size: 21px;
		text-decoration: underline;
		text-underline-offset: 3px;
	}

	.check {
		color: #c4372a;
		font-weight: 700;
		padding-left: 1px;
	}

	.money {
		padding-right: 12px;
		text-align: right;
	}

	.selection {
		position: absolute;
		top: 44px;
		left: 42px;
		border: 4px solid var(--green);
		border-top: 0;
	}

	.selection::before {
		content: '';
		position: absolute;
		inset: 0;
		border: 2px solid #fff;
		border-top: 0;
	}

	.handle {
		position: absolute;
		right: -8px;
		bottom: -8px;
		width: 14px;
		height: 14px;
		border: 2px solid #fff;
		background: var(--green);
	}

	/* sheet tabs */
	.sheet-tabs {
		display: flex;
		flex: none;
		height: 54px;
		border-top: 2px solid #cfcfcf;
		border-bottom: 2px solid #a9a9a9;
		background: #f2f2f2;
		color: #6e6e6e;
		font: 700 23px 'Liberation Sans', Arial, sans-serif;
	}

	.arrows {
		display: flex;
		align-items: center;
		gap: 32px;
		width: 121px;
		padding: 0 0 0 30px;
	}

	.sheet-tab {
		height: 42px;
		border-right: 2px solid #d2d2d2;
		white-space: nowrap;
	}

	.sheet-tab.active {
		height: 46px;
		margin-top: -2px;
		padding-top: 2px;
		border: 2px solid #bdbdbd;
		border-top: 0;
		border-radius: 0 0 6px 6px;
		background: #fff;
		color: #4a9067;
		font-size: 24px;
	}

	.filler {
		width: 32px;
		height: 42px;
		border-right: 2px solid #d2d2d2;
	}

	.add {
		width: 76px;
		height: 42px;
		border-right: 2px solid #d2d2d2;
	}

	/* status bar */
	.status {
		display: flex;
		align-items: center;
		justify-content: flex-end;
		flex: none;
		height: 46px;
		padding-right: 50px;
		background: linear-gradient(#e6e6e6, #d6d6d6);
		color: #5a5a5a;
		font-size: 24px;
	}

	.stats {
		display: flex;
		gap: 41px;
		margin-right: 22px;
		white-space: nowrap;
	}

	.view {
		width: 72px;
		height: 46px;
	}

	.view.on {
		background: #acacac;
	}

	.zoom {
		display: flex;
		align-items: center;
		gap: 16px;
		margin-left: 14px;
	}

	.zoom input {
		width: 196px;
		height: 26px;
		margin: 0;
		background: linear-gradient(#9b9b9b, #9b9b9b) center / 100% 8px no-repeat;
		appearance: none;
	}

	.zoom input::-webkit-slider-thumb {
		width: 24px;
		height: 24px;
		border: 1px solid #bbb;
		border-radius: 50%;
		background: #fff;
		appearance: none;
	}

	.percent-label {
		margin-left: 18px;
		font-size: 23px;
	}
</style>
